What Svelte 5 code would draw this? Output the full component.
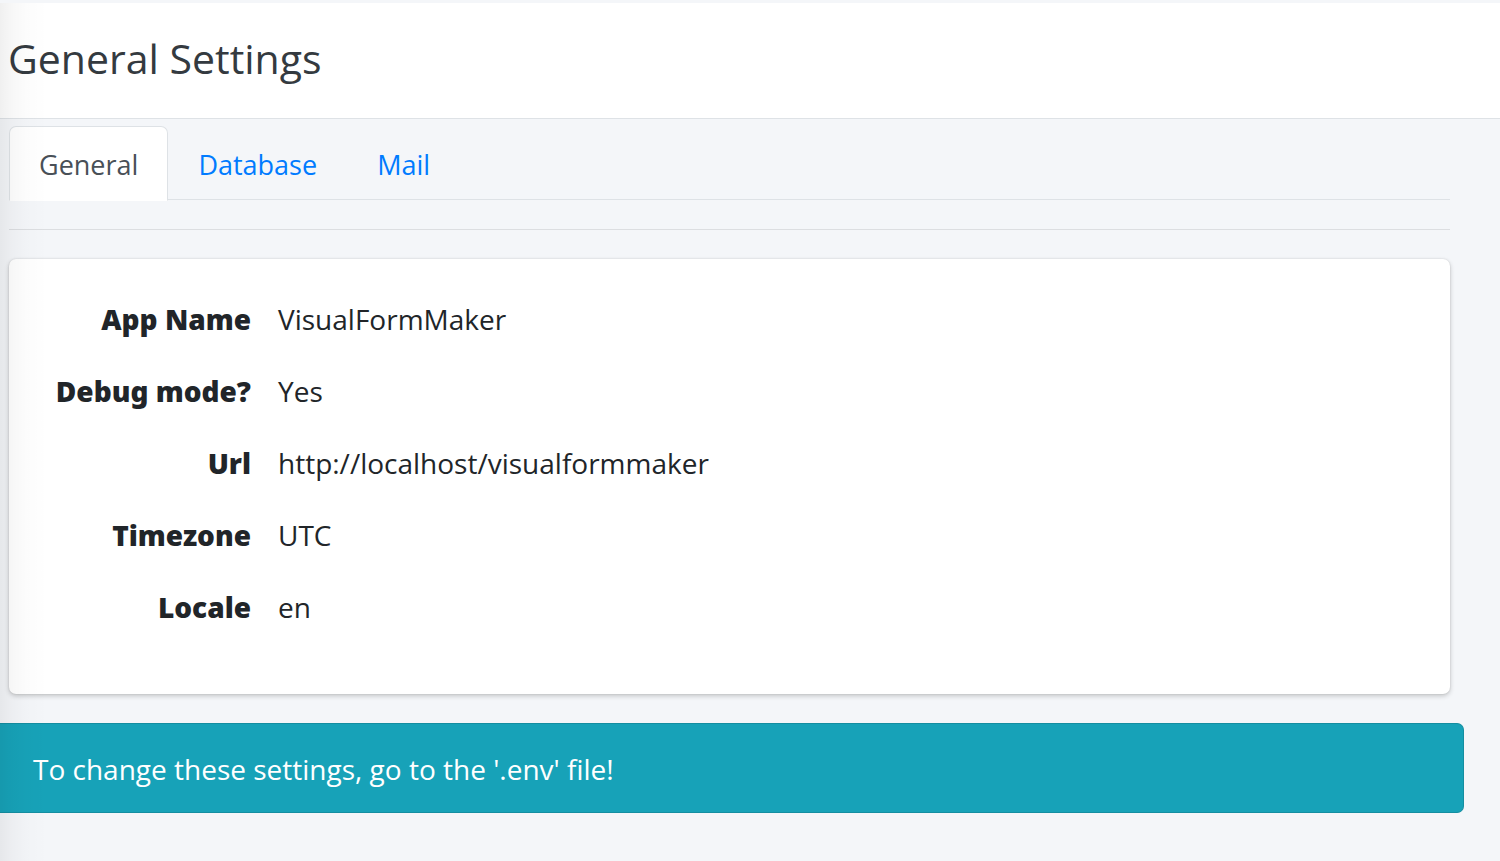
<script>
  const tabs = ['General', 'Database', 'Mail'];
  let active = $state('General');
  const settings = [
    ['App Name', 'VisualFormMaker'],
    ['Debug mode?', 'Yes'],
    ['Url', 'http://localhost/visualformmaker'],
    ['Timezone', 'UTC'],
    ['Locale', 'en'],
  ];
</script>

<div class="page">
  <header>
    <h1>General Settings</h1>
  </header>
  <main>
    <nav class="tabs">
      {#each tabs as tab}
        <a
          href={'#' + tab.toLowerCase()}
          class:active={tab === active}
          aria-current={tab === active ? 'page' : undefined}
          onclick={() => (active = tab)}>{tab}</a>
      {/each}
    </nav>
    <hr />
    <section class="card">
      <dl>
        {#each settings as [label, value]}
          <dt>{label}</dt>
          <dd>{value}</dd>
        {/each}
      </dl>
    </section>
  </main>
  <div class="alert" role="alert">To change these settings, go to the '.env' file!</div>
  <div class="edge"></div>
</div>

<style>
  :global(body) {
    margin: 0;
    background: #f4f6f9;
  }
  .page {
    position: relative;
    box-sizing: border-box;
    min-height: 100vh;
    border-top: 3px solid #f4f6f9;
    overflow: hidden;
    font-family: "Segoe UI", "Open Sans", "Noto Sans", sans-serif;
    font-size: 28px;
    line-height: 43px;
    color: #212529;
  }
  header {
    padding: 28px 8px 33px;
    background: #fff;
    border-bottom: 1px solid #dee2e6;
  }
  h1 {
    margin: 0;
    font-size: 41px;
    font-weight: 400;
    line-height: 54px;
    color: #343a40;
  }
  main {
    padding: 7px 50px 0 9px;
  }
  .tabs {
    display: flex;
    border-bottom: 1px solid #dee2e6;
    font-size: 27px;
  }
  .tabs a {
    margin-bottom: -2px;
    padding: 16px 29px 14px;
    border: 1px solid transparent;
    border-radius: 7px 7px 0 0;
    color: #007bff;
    text-decoration: none;
  }
  .tabs a.active {
    background: #fff;
    border-color: #dee2e6;
    border-bottom-color: #fff;
    color: #495057;
  }
  hr {
    margin: 29px 0;
    border: 0;
    border-top: 1px solid #dcdee1;
  }
  .card {
    padding: 39px 28px 65px;
    border-radius: 7px;
    background: #fff;
    box-shadow: 0 0 2px rgba(0, 0, 0, 0.13), 0 2px 5px rgba(0, 0, 0, 0.2);
  }
  dl {
    display: grid;
    grid-template-columns: 214px 1fr;
    gap: 29px 27px;
    margin: 0;
  }
  dt {
    font-family: "Segoe UI", "Noto Sans", "Open Sans", sans-serif;
    font-weight: 900;
    text-align: right;
    white-space: nowrap;
  }
  dd {
    margin: 0;
  }
  .alert {
    margin: 29px 36px 48px 0;
    padding: 24px 33px 21px;
    border: 1px solid #148ea1;
    border-left: 0;
    border-radius: 0 7px 7px 0;
    background: #17a2b8;
    color: #fff;
  }
  .edge {
    position: absolute;
    inset: 0 auto 0 0;
    width: 48px;
    pointer-events: none;
    background: linear-gradient(to right, rgba(0, 0, 0, 0.06), rgba(0, 0, 0, 0.03) 25%, rgba(0, 0, 0, 0.01) 55%, transparent);
  }
</style>
